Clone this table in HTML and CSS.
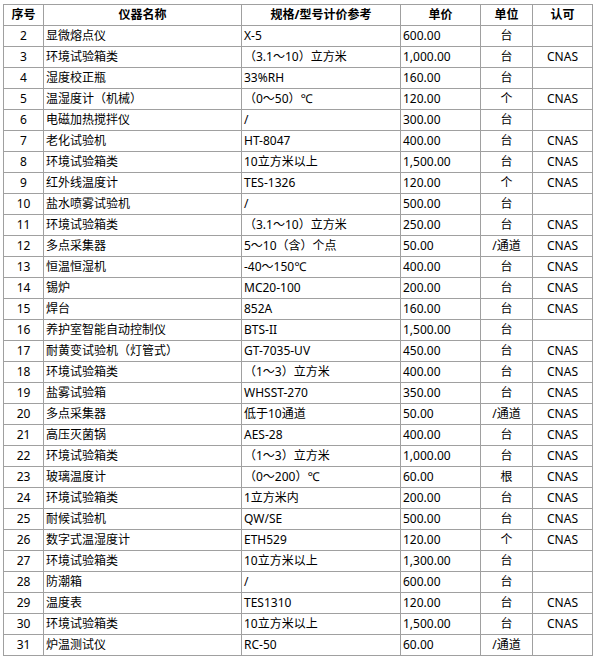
FILE: index.html
```html
<!DOCTYPE html>
<html lang="zh-CN">
<head>
<meta charset="utf-8">
<title>仪器计价参考</title>
<link rel="stylesheet" href="styles.css">
</head>
<body>
<div class="wrap">
<table class="price">
<colgroup>
<col class="c-no"><col class="c-name"><col class="c-spec"><col class="c-price"><col class="c-unit"><col class="c-cert">
</colgroup>
<thead>
<tr><th>序号</th><th>仪器名称</th><th>规格/型号计价参考</th><th>单价</th><th>单位</th><th>认可</th></tr>
</thead>
<tbody>
<tr><td class="ctr">2</td><td>显微熔点仪</td><td>X-5</td><td>600.00</td><td class="ctr">台</td><td class="ctr"></td></tr>
<tr><td class="ctr">3</td><td>环境试验箱类</td><td>（3.1～10）立方米</td><td>1,000.00</td><td class="ctr">台</td><td class="ctr">CNAS</td></tr>
<tr><td class="ctr">4</td><td>湿度校正瓶</td><td>33%RH</td><td>160.00</td><td class="ctr">台</td><td class="ctr"></td></tr>
<tr><td class="ctr">5</td><td>温湿度计（机械）</td><td>（0～50）℃</td><td>120.00</td><td class="ctr">个</td><td class="ctr">CNAS</td></tr>
<tr><td class="ctr">6</td><td>电磁加热搅拌仪</td><td>/</td><td>300.00</td><td class="ctr">台</td><td class="ctr"></td></tr>
<tr><td class="ctr">7</td><td>老化试验机</td><td>HT-8047</td><td>400.00</td><td class="ctr">台</td><td class="ctr">CNAS</td></tr>
<tr><td class="ctr">8</td><td>环境试验箱类</td><td>10立方米以上</td><td>1,500.00</td><td class="ctr">台</td><td class="ctr">CNAS</td></tr>
<tr><td class="ctr">9</td><td>红外线温度计</td><td>TES-1326</td><td>120.00</td><td class="ctr">个</td><td class="ctr">CNAS</td></tr>
<tr><td class="ctr">10</td><td>盐水喷雾试验机</td><td>/</td><td>500.00</td><td class="ctr">台</td><td class="ctr"></td></tr>
<tr><td class="ctr">11</td><td>环境试验箱类</td><td>（3.1～10）立方米</td><td>250.00</td><td class="ctr">台</td><td class="ctr">CNAS</td></tr>
<tr><td class="ctr">12</td><td>多点采集器</td><td>5～10（含）个点</td><td>50.00</td><td class="ctr">/通道</td><td class="ctr">CNAS</td></tr>
<tr><td class="ctr">13</td><td>恒温恒湿机</td><td>-40～150℃</td><td>400.00</td><td class="ctr">台</td><td class="ctr">CNAS</td></tr>
<tr><td class="ctr">14</td><td>锡炉</td><td>MC20-100</td><td>200.00</td><td class="ctr">台</td><td class="ctr">CNAS</td></tr>
<tr><td class="ctr">15</td><td>焊台</td><td>852A</td><td>160.00</td><td class="ctr">台</td><td class="ctr">CNAS</td></tr>
<tr><td class="ctr">16</td><td>养护室智能自动控制仪</td><td>BTS-II</td><td>1,500.00</td><td class="ctr">台</td><td class="ctr"></td></tr>
<tr><td class="ctr">17</td><td>耐黄变试验机（灯管式）</td><td>GT-7035-UV</td><td>450.00</td><td class="ctr">台</td><td class="ctr">CNAS</td></tr>
<tr><td class="ctr">18</td><td>环境试验箱类</td><td>（1～3）立方米</td><td>400.00</td><td class="ctr">台</td><td class="ctr">CNAS</td></tr>
<tr><td class="ctr">19</td><td>盐雾试验箱</td><td>WHSST-270</td><td>350.00</td><td class="ctr">台</td><td class="ctr">CNAS</td></tr>
<tr><td class="ctr">20</td><td>多点采集器</td><td>低于10通道</td><td>50.00</td><td class="ctr">/通道</td><td class="ctr">CNAS</td></tr>
<tr><td class="ctr">21</td><td>高压灭菌锅</td><td>AES-28</td><td>400.00</td><td class="ctr">台</td><td class="ctr">CNAS</td></tr>
<tr><td class="ctr">22</td><td>环境试验箱类</td><td>（1～3）立方米</td><td>1,000.00</td><td class="ctr">台</td><td class="ctr">CNAS</td></tr>
<tr><td class="ctr">23</td><td>玻璃温度计</td><td>（0～200）℃</td><td>60.00</td><td class="ctr">根</td><td class="ctr">CNAS</td></tr>
<tr><td class="ctr">24</td><td>环境试验箱类</td><td>1立方米内</td><td>200.00</td><td class="ctr">台</td><td class="ctr">CNAS</td></tr>
<tr><td class="ctr">25</td><td>耐候试验机</td><td>QW/SE</td><td>500.00</td><td class="ctr">台</td><td class="ctr">CNAS</td></tr>
<tr><td class="ctr">26</td><td>数字式温湿度计</td><td>ETH529</td><td>120.00</td><td class="ctr">个</td><td class="ctr">CNAS</td></tr>
<tr><td class="ctr">27</td><td>环境试验箱类</td><td>10立方米以上</td><td>1,300.00</td><td class="ctr">台</td><td class="ctr"></td></tr>
<tr><td class="ctr">28</td><td>防潮箱</td><td>/</td><td>600.00</td><td class="ctr">台</td><td class="ctr"></td></tr>
<tr><td class="ctr">29</td><td>温度表</td><td>TES1310</td><td>120.00</td><td class="ctr">台</td><td class="ctr">CNAS</td></tr>
<tr><td class="ctr">30</td><td>环境试验箱类</td><td>10立方米以上</td><td>1,500.00</td><td class="ctr">台</td><td class="ctr">CNAS</td></tr>
<tr><td class="ctr">31</td><td>炉温测试仪</td><td>RC-50</td><td>60.00</td><td class="ctr">/通道</td><td class="ctr"></td></tr>
</tbody>
</table>
</div>
</body>
</html>
```
FILE: styles.css
```css
html, body {
  margin: 0;
  padding: 0;
  background: #fff;
}
.wrap {
  padding: 4px 0 0 3px;
}
.price {
  border-collapse: collapse;
  table-layout: fixed;
  width: 590px;
  font-family: "Noto Sans", "Noto Sans CJK SC", sans-serif;
  font-size: 12px;
  color: #000;
}
.c-no { width: 40px; }
.c-name { width: 198px; }
.c-spec { width: 159px; }
.c-price { width: 80px; }
.c-unit { width: 52px; }
.c-cert { width: 60px; }
.price tr {
  height: 21px;
}
.price th,
.price td {
  border: 1px solid #a0a0a0;
  padding: 0 0 0 2px;
  line-height: 16px;
  text-align: left;
  vertical-align: middle;
  white-space: nowrap;
  overflow: hidden;
}
.price th {
  font-weight: bold;
  text-align: center;
  padding: 0;
}
.price td.ctr {
  text-align: center;
  padding: 0;
}
```
